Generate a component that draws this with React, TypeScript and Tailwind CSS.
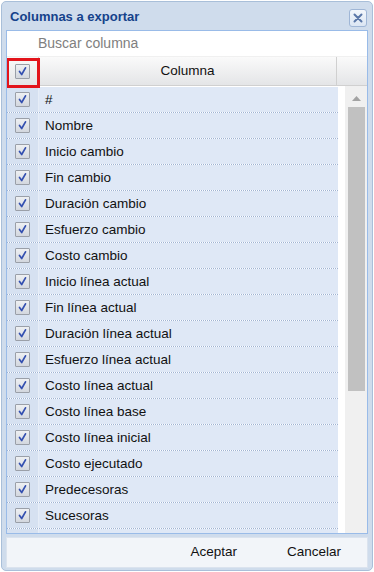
import React from "react";

const rows = [
  "#",
  "Nombre",
  "Inicio cambio",
  "Fin cambio",
  "Duración cambio",
  "Esfuerzo cambio",
  "Costo cambio",
  "Inicio línea actual",
  "Fin línea actual",
  "Duración línea actual",
  "Esfuerzo línea actual",
  "Costo línea actual",
  "Costo línea base",
  "Costo línea inicial",
  "Costo ejecutado",
  "Predecesoras",
  "Sucesoras",
  "",
];

function Check() {
  return (
    <div className="w-[15px] h-[15px] border border-[#9a9fa8] bg-gradient-to-b from-[#eef0f3] to-[#d3d7de] flex items-center justify-center rounded-[1px]">
      <svg width="11" height="11" viewBox="0 0 11 11">
        <path d="M2.5 5.5 L4.7 8.5 L8.5 1.8" fill="none" stroke="#3450b0" strokeWidth="1.7" strokeLinecap="round" strokeLinejoin="round" />
      </svg>
    </div>
  );
}

export default function App() {
  return (
    <div className="w-[374px] h-[572px] bg-white p-[1px]" style={{ fontFamily: '"Liberation Sans", Arial, sans-serif' }}>
      <div className="h-full rounded-[5px] border border-[#a9bfd9] bg-[#cfdcec] flex flex-col px-[4px] pb-[2px]">
        <div className="h-[28px] flex items-center justify-between pl-[4px] pr-[1px] shrink-0">
          <span className="text-[13px] font-bold text-[#15428b] pt-[2px]">Columnas a exportar</span>
          <div className="w-[18px] h-[18px] mt-[3px] rounded-[3px] border border-[#9fb6d6] bg-gradient-to-b from-[#f3f7fc] to-[#dbe6f4] flex items-center justify-center">
            <svg width="10" height="10" viewBox="0 0 10 10">
              <path d="M1.5 1.5 L8.5 8.5 M8.5 1.5 L1.5 8.5" stroke="#5a77a8" strokeWidth="2" strokeLinecap="round" />
            </svg>
          </div>
        </div>
        <div className="border border-[#99bbe8] bg-white flex flex-col h-[504px] shrink-0 overflow-hidden">
          <div className="h-[26px] shrink-0 bg-white flex items-center pl-[31px] text-[14px] text-[#808080] border-b border-[#f0f0f0]">
            Buscar columna
          </div>
          <div className="h-[29px] shrink-0 flex bg-gradient-to-b from-[#fafafa] to-[#e4e5e7] border-b border-[#d0d0d0] text-[13.5px] text-[#111]">
            <div className="relative w-[32px] shrink-0 flex items-center justify-center border-r border-[#d0d0d0]">
              <Check />
              <div className="absolute left-[-1px] top-[1px] w-[34px] h-[30px] border-[3px] border-[#e3141b]" />
            </div>
            <div className="w-[298px] shrink-0 flex items-center justify-center border-r border-[#d0d0d0] pt-[1px]">Columna</div>
            <div className="flex-1" />
          </div>
          <div className="flex flex-1 min-h-0">
            <div className="w-[331px] shrink-0 flex flex-col overflow-hidden pt-[1px]">
              {rows.map((r, i) => (
                <div key={i} className="h-[26px] shrink-0 flex border-b border-dotted border-[#9fb3d3] text-[13.5px] text-[#111]">
                  <div className="w-[32px] shrink-0 bg-[#d6e1f1] flex items-center justify-center border-r border-[#e6edf7]">
                    {i < 17 ? <Check /> : null}
                  </div>
                  <div className="flex-1 bg-[#dfe8f6] flex items-center pl-[6px] pt-[2px]">{r}</div>
                </div>
              ))}
            </div>
            <div className="w-[7px] shrink-0 bg-white" />
            <div className="flex-1 bg-[#f0f0f0] flex flex-col items-center pt-[10px]">
              <svg width="9" height="5" viewBox="0 0 9 5">
                <path d="M0 5 L4.5 0 L9 5 Z" fill="#a3a3a3" />
              </svg>
              <div className="w-[17px] h-[284px] bg-[#c1c1c1] mt-[6px]" />
            </div>
          </div>
        </div>
        <div className="mt-[3px] h-[31px] shrink-0 bg-[#f2f5f9] border border-[#dbe3ee] flex items-center justify-end text-[13.5px] text-[#111] gap-[50px] pr-[26px]">
          <span>Aceptar</span>
          <span>Cancelar</span>
        </div>
      </div>
    </div>
  );
}
